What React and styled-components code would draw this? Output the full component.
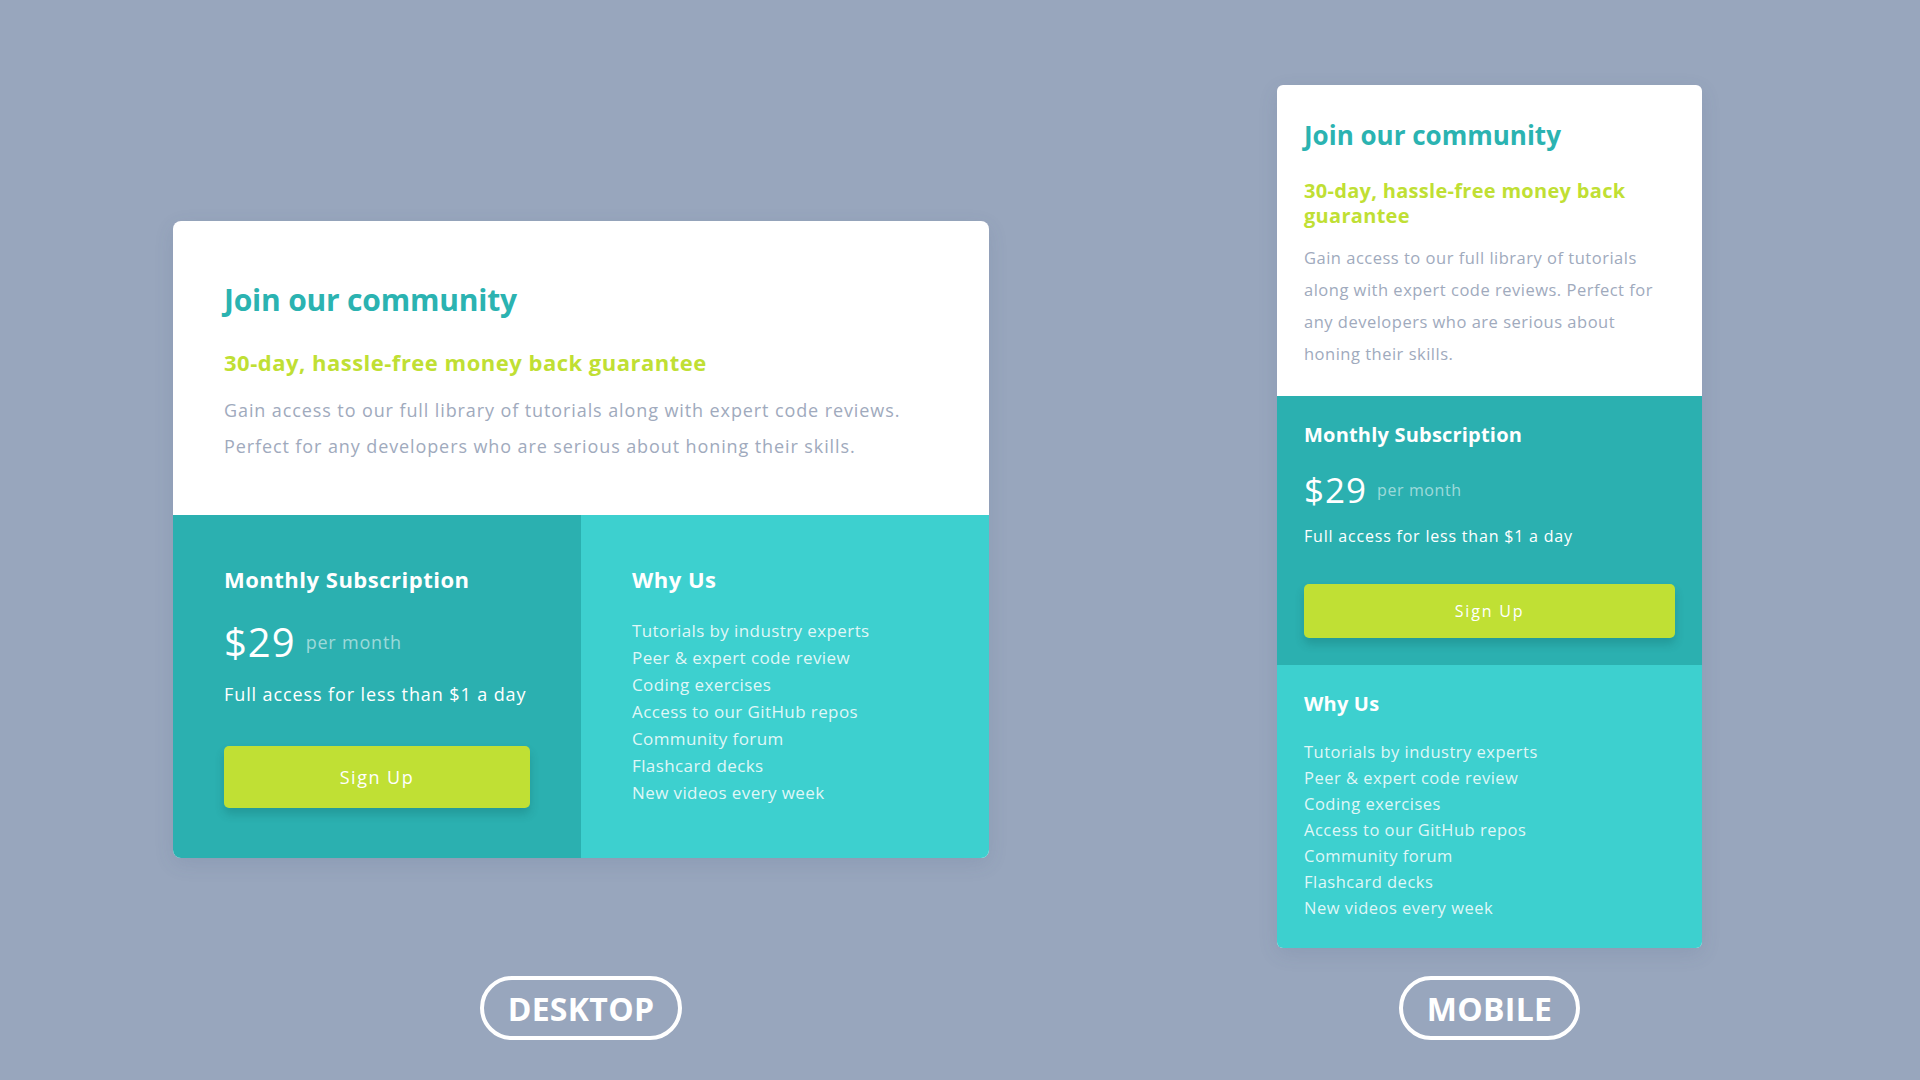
import styled, { createGlobalStyle } from "styled-components";

const GlobalStyle = createGlobalStyle`
  html, body {
    margin: 0;
    padding: 0;
    background: #98a6bd;
  }
  body {
    font-family: "Open Sans", "Liberation Sans", sans-serif;
  }
`;

const features = [
  "Tutorials by industry experts",
  "Peer & expert code review",
  "Coding exercises",
  "Access to our GitHub repos",
  "Community forum",
  "Flashcard decks",
  "New videos every week",
];

// font size / letter spacing per layout
const sizes = {
  desktop: {
    title: [30, -0.2],
    sub: [22, 0.5],
    body: [18, 0.9],
    head: [22, 0.5],
    price: [40, 1],
    per: [18, 0.8],
    note: [18, 0.9],
    item: [17, 0.4],
    button: [18, 1.5],
    itemLh: 27,
  },
  mobile: {
    title: [26, 0],
    sub: [20, 0.3],
    body: [16.5, 0.5],
    head: [20, 0.2],
    price: [35, 1],
    per: [16, 0.6],
    note: [16, 0.8],
    item: [16.5, 0.5],
    button: [16, 1.8],
    itemLh: 26,
  },
};

const font = (pair) => `
  font-size: ${pair[0]}px;
  letter-spacing: ${pair[1]}px;
`;

function App() {
  return (
    <>
      <GlobalStyle />
      <Stage>
        <Showcase $top={221}>
          <CardArea>
            <PricingCard size="desktop" />
          </CardArea>
          <Label>DESKTOP</Label>
        </Showcase>
        <Showcase $top={85}>
          <CardArea>
            <PricingCard size="mobile" />
          </CardArea>
          <Label>MOBILE</Label>
        </Showcase>
      </Stage>
    </>
  );
}

function PricingCard({ size }) {
  const s = sizes[size];
  const mobile = size === "mobile";
  return (
    <Card $mobile={mobile}>
      <Intro $mobile={mobile}>
        <Title $s={s}>Join our community</Title>
        <Guarantee $s={s} $mobile={mobile}>
          30-day, hassle-free money back guarantee
        </Guarantee>
        <Blurb $s={s} $mobile={mobile}>
          Gain access to our full library of tutorials along with expert code
          reviews. Perfect for any developers who are serious about honing
          their skills.
        </Blurb>
      </Intro>
      <Bottom $mobile={mobile}>
        <Subscription $mobile={mobile}>
          <Heading $s={s}>Monthly Subscription</Heading>
          <PriceRow $mobile={mobile}>
            <Price $s={s}>$29</Price>
            <Per $s={s}>per month</Per>
          </PriceRow>
          <Note $s={s} $mobile={mobile}>Full access for less than $1 a day</Note>
          <SignUp $s={s} $mobile={mobile}>Sign Up</SignUp>
        </Subscription>
        <Why $mobile={mobile}>
          <Heading $s={s}>Why Us</Heading>
          <Features $s={s} $mobile={mobile}>
            {features.map((f) => (
              <li key={f}>{f}</li>
            ))}
          </Features>
        </Why>
      </Bottom>
    </Card>
  );
}

export default App;

const Stage = styled.div`
  width: 1920px;
  height: 1080px;
  display: flex;
  padding-left: 173px;
  gap: 288px;
  box-sizing: border-box;
`;

const Showcase = styled.div`
  height: 1080px;
  display: flex;
  flex-direction: column;
  align-items: center;
  padding-top: ${(p) => p.$top}px;
  padding-bottom: 40px;
  box-sizing: border-box;
`;

const CardArea = styled.div`
  flex: 1;
`;

const Label = styled.div`
  font-family: "Open Sans", sans-serif;
  font-weight: 700;
  font-size: 32px;
  color: #fff;
  height: 64px;
  box-sizing: border-box;
  border: 4px solid #fff;
  border-radius: 32px;
  padding: 0 24px;
  display: flex;
  align-items: center;
  letter-spacing: 0.3px;
`;

const Card = styled.div`
  width: ${(p) => (p.$mobile ? 425 : 816)}px;
  background: #fff;
  border-radius: ${(p) => (p.$mobile ? 6 : 8)}px;
  overflow: hidden;
  box-shadow: 0 6px 20px rgba(60, 80, 120, 0.12);
`;

const Intro = styled.div`
  padding: ${(p) => (p.$mobile ? "35px 27px 26px" : "61px 51px 51px")};
`;

const Title = styled.h1`
  margin: 0;
  ${(p) => font(p.$s.title)}
  line-height: 1.2;
  font-weight: 700;
  color: #2bb3b1;
`;

const Guarantee = styled.h2`
  margin: ${(p) => (p.$mobile ? "27px 0 0" : "31px 0 0")};
  ${(p) => font(p.$s.sub)}
  line-height: ${(p) => (p.$mobile ? "25px" : "1.2")};
  font-weight: 700;
  color: #c0df34;
`;

const Blurb = styled.p`
  margin: ${(p) => (p.$mobile ? "14px 0 0" : "17px 0 0")};
  ${(p) => font(p.$s.body)}
  line-height: ${(p) => (p.$mobile ? "32px" : "36px")};
  color: #a0aabd;
`;

const Bottom = styled.div`
  display: grid;
  grid-template-columns: ${(p) => (p.$mobile ? "1fr" : "1fr 1fr")};
`;

const Subscription = styled.div`
  background: #2bb0b0;
  padding: ${(p) => (p.$mobile ? "27px 27px 27px" : "51px 51px 50px")};
  display: flex;
  flex-direction: column;
`;

const Why = styled.div`
  background: #3dd0cf;
  padding: ${(p) => (p.$mobile ? "27px 27px 27px" : "51px 51px 50px")};
`;

const Heading = styled.h3`
  margin: 0;
  ${(p) => font(p.$s.head)}
  line-height: 1.2;
  font-weight: 700;
  color: #fff;
`;

const PriceRow = styled.div`
  display: flex;
  align-items: center;
  gap: 10px;
  margin-top: ${(p) => (p.$mobile ? 22 : 25)}px;
`;

const Price = styled.span`
  ${(p) => font(p.$s.price)}
  line-height: 1.2;
  color: #fff;
`;

const Per = styled.span`
  ${(p) => font(p.$s.per)}
  color: rgba(255, 255, 255, 0.55);
`;

const Note = styled.p`
  margin: ${(p) => (p.$mobile ? "16px 0 0" : "18px 0 0")};
  ${(p) => font(p.$s.note)}
  line-height: 1.2;
  color: #fff;
`;

const SignUp = styled.button`
  margin-top: ${(p) => (p.$mobile ? 38 : 41)}px;
  height: ${(p) => (p.$mobile ? 54 : 62)}px;
  width: 100%;
  border: none;
  border-radius: 5px;
  background: #c0e034;
  color: #fff;
  font-family: "Open Sans", sans-serif;
  ${(p) => font(p.$s.button)}
  box-shadow: 0 6px 10px rgba(0, 60, 60, 0.2);
  cursor: pointer;
`;

const Features = styled.ul`
  list-style: none;
  margin: ${(p) => (p.$mobile ? 22.6 : 24.6)}px 0 0;
  padding: 0;
  ${(p) => font(p.$s.item)}
  line-height: ${(p) => p.$s.itemLh}px;
  color: rgba(255, 255, 255, 0.85);
`;
